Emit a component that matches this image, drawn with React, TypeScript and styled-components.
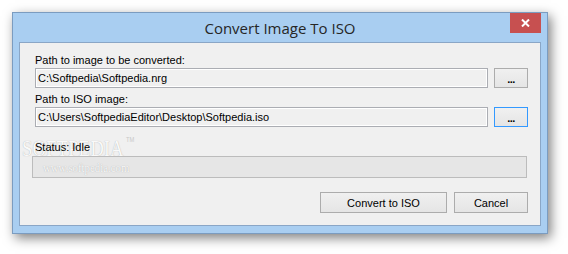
import styled, { createGlobalStyle } from "styled-components";

const GlobalStyle = createGlobalStyle`
  html, body {
    margin: 0;
    padding: 0;
    background: #ffffff;
  }
  body {
    font-family: "Liberation Sans", Arial, sans-serif;
  }
`;

const Stage = styled.div`
  width: 568px;
  height: 254px;
  padding: 12px 0 0 12px;
  box-sizing: border-box;
  overflow: hidden;
  background: #ffffff;
`;

const Window = styled.div`
  width: 536px;
  height: 222px;
  box-sizing: border-box;
  border: 1px solid #7b9cc0;
  background: #a9cef1;
  display: flex;
  flex-direction: column;
  box-shadow: 3px 4px 11px rgba(0, 0, 0, 0.5);
`;

const TitleBar = styled.div`
  position: relative;
  flex: none;
  height: 29px;
  display: flex;
  align-items: center;
  justify-content: center;
  font-family: "Open Sans", "Noto Sans", sans-serif;
  font-size: 15px;
  color: #262626;
  padding-top: 1px;
  box-sizing: border-box;
`;

const CloseButton = styled.div`
  position: absolute;
  top: 0;
  right: 6px;
  width: 31px;
  height: 20px;
  background: #c75050;
  display: flex;
  align-items: center;
  justify-content: center;
`;

const Client = styled.div`
  position: relative;
  flex: 1;
  margin: 0 6px 7px;
  border: 1px solid #8aa6c6;
  background: #f0f0f0;
  padding: 0 12px;
  display: flex;
  flex-direction: column;
  font-size: 11px;
  color: #000;
`;

const Label = styled.div<{ $top: number }>`
  height: 13px;
  line-height: 13px;
  margin-top: ${(p) => p.$top}px;
  padding-left: 3px;
  position: relative;
  z-index: 1;
`;

const FieldRow = styled.div`
  display: flex;
  gap: 6px;
  margin: 1px 0 0 3px;
  height: 20px;
`;

const PathBox = styled.div`
  width: 453px;
  box-sizing: border-box;
  border: 1px solid #abadb3;
  box-shadow: inset 0 0 0 1px #ffffff;
  background: #f0f0f0;
  padding-left: 2px;
  display: flex;
  align-items: center;
  white-space: nowrap;
`;

const Button = styled.div<{ $width: number; $focused?: boolean }>`
  width: ${(p) => p.$width}px;
  box-sizing: border-box;
  border: 1px solid ${(p) => (p.$focused ? "#3399ff" : "#acacac")};
  background: linear-gradient(#f0f0f0, #e5e5e5);
  display: flex;
  align-items: center;
  justify-content: center;
  font-size: 11px;
`;

const Dots = styled.span`
  font-weight: bold;
  letter-spacing: -0.5px;
  padding-top: 1px;
`;

const Progress = styled.div`
  position: relative;
  height: 22px;
  margin: 2px 1px 0 0;
  box-sizing: border-box;
  border: 1px solid #bcbcbc;
  background: #e6e6e6;
`;

const ButtonRow = styled.div`
  display: flex;
  justify-content: flex-end;
  gap: 7px;
  height: 21px;
  margin-top: 14px;
`;

const Watermark = styled.div`
  position: absolute;
  left: 2px;
  top: 93px;
  font-family: "Liberation Serif", serif;
  font-size: 23px;
  color: #f9f9f9;
  text-shadow: 0 0 1px #a8a8a8;
  transform: scaleX(0.82);
  transform-origin: left top;
  z-index: 0;
  sup {
    font-family: "Liberation Sans", sans-serif;
    font-size: 7px;
    vertical-align: top;
    color: #c8c8c8;
    text-shadow: none;
    margin-left: 3px;
  }
`;

const WatermarkUrl = styled.div`
  position: absolute;
  left: 10px;
  top: 4px;
  font-family: "Liberation Serif", serif;
  font-size: 12px;
  color: #f8f8f8;
  text-shadow: 0 0 1px #a6a6a6;
  transform: scaleX(0.9);
  transform-origin: left top;
`;

const App = () => {
  return (
    <Stage>
      <GlobalStyle />
      <Window>
        <TitleBar>
          Convert Image To ISO
          <CloseButton>
            <svg width="9" height="8" viewBox="0 0 9 8">
              <path d="M1 0.5 L8 7.5 M8 0.5 L1 7.5" stroke="#fff" strokeWidth="2" />
            </svg>
          </CloseButton>
        </TitleBar>
        <Client>
          <Label $top={11}>Path to image to be converted:</Label>
          <FieldRow>
            <PathBox>C:\Softpedia\Softpedia.nrg</PathBox>
            <Button $width={34}>
              <Dots>...</Dots>
            </Button>
          </FieldRow>
          <Label $top={5}>Path to ISO image:</Label>
          <FieldRow>
            <PathBox>C:\Users\SoftpediaEditor\Desktop\Softpedia.iso</PathBox>
            <Button $width={34} $focused>
              <Dots>...</Dots>
            </Button>
          </FieldRow>
          <Watermark>
            SOFTPEDIA<sup>TM</sup>
          </Watermark>
          <Label $top={14}>Status: Idle</Label>
          <Progress>
            <WatermarkUrl>www.softpedia.com</WatermarkUrl>
          </Progress>
          <ButtonRow>
            <Button $width={127}>Convert to ISO</Button>
            <Button $width={74}>Cancel</Button>
          </ButtonRow>
        </Client>
      </Window>
    </Stage>
  );
};

export default App;
